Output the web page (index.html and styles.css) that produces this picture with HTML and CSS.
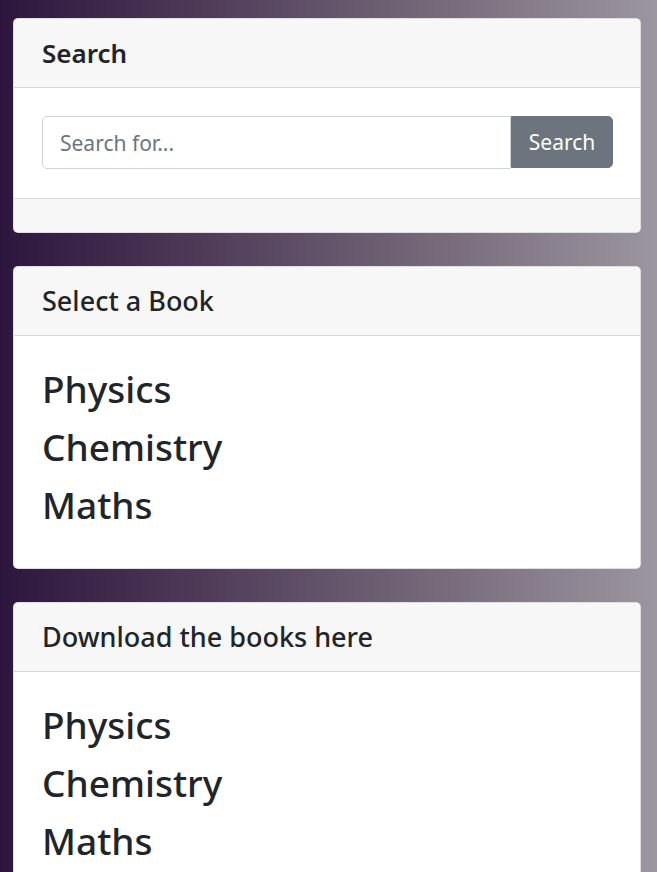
FILE: index.html
```html
<!DOCTYPE html>
<html>
<head>
<meta charset="utf-8">
<link rel="stylesheet" href="styles.css">
</head>
<body>
<div class="page">
  <div class="card">
    <div class="card-header"><h4 class="title strong">Search</h4></div>
    <div class="card-body search-body">
      <div class="input-group">
        <input class="form-control" type="text" placeholder="Search for...">
        <button class="btn">Search</button>
      </div>
    </div>
    <div class="card-footer"></div>
  </div>
  <div class="card">
    <div class="card-header"><h5 class="title">Select a Book</h5></div>
    <div class="card-body list-body">
      <div class="item">Physics</div>
      <div class="item">Chemistry</div>
      <div class="item">Maths</div>
    </div>
  </div>
  <div class="card">
    <div class="card-header"><h5 class="title">Download the books here</h5></div>
    <div class="card-body list-body">
      <div class="item">Physics</div>
      <div class="item">Chemistry</div>
      <div class="item">Maths</div>
    </div>
  </div>
</div>
</body>
</html>
```
FILE: styles.css
```css
html, body {
  margin: 0;
  padding: 0;
  height: 100%;
}
body {
  background: linear-gradient(to right, #2d163d 0%, #4e3a58 30%, #756879 65%, #9b969f 100%);
  font-family: "Noto Sans", "Open Sans", sans-serif;
  color: #212529;
  overflow: hidden;
}
.page {
  padding: 18px 16px 0 13px;
  display: flex;
  flex-direction: column;
  gap: 33px;
}
.card {
  background: #fff;
  border: 1px solid rgba(0,0,0,0.125);
  border-radius: 5px;
  overflow: hidden;
}
.card-header {
  background: #f7f7f7;
  border-bottom: 1px solid rgba(0,0,0,0.125);
  height: 68px;
  display: flex;
  align-items: center;
  padding: 0 28px;
}
.title {
  margin: 0;
  font-size: 27px;
  font-weight: 500;
  line-height: 1.2;
}
.title.strong {
  font-weight: 600;
  font-size: 26px;
  padding-top: 2px;
}
.search-body {
  padding: 28px 27px 29px 28px;
}
.input-group {
  display: flex;
  height: 53px;
}
.form-control {
  flex: 1;
  min-width: 0;
  border: 1px solid #ced4da;
  border-radius: 5px 0 0 5px;
  padding: 0 17px;
  font-family: inherit;
  font-size: 21px;
  color: #495057;
  outline: none;
  box-sizing: border-box;
  height: 53px;
}
.form-control::placeholder {
  color: #6c757d;
}
.btn {
  width: 102px;
  height: 52px;
  background: #6c757d;
  border: 1px solid #6c757d;
  border-radius: 0 5px 5px 0;
  color: #fff;
  font-family: inherit;
  font-size: 21px;
  padding: 0;
}
.card-footer {
  background: #f7f7f7;
  border-top: 1px solid rgba(0,0,0,0.125);
  height: 33px;
}
.list-body {
  padding: 24px 28px 34px 28px;
}
.item {
  font-size: 37px;
  line-height: 58px;
  font-weight: 500;
}
```
